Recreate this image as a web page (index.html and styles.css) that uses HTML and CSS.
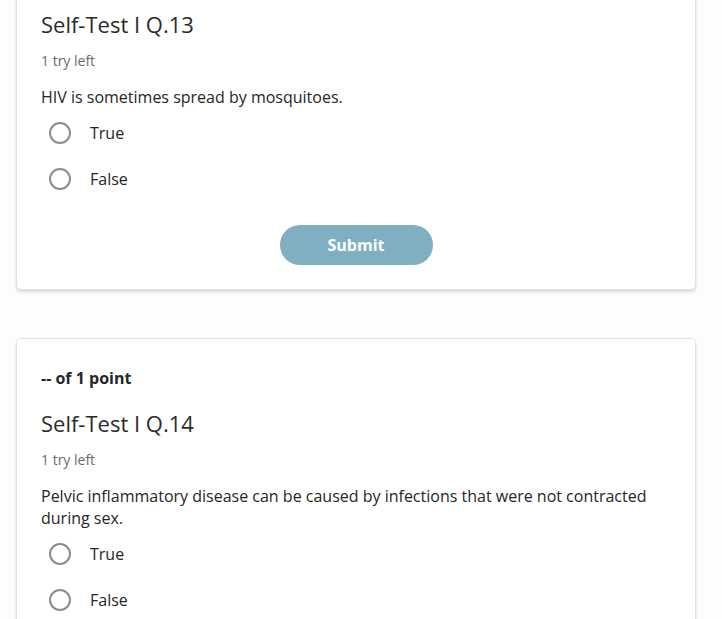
FILE: index.html
```html
<!DOCTYPE html>
<html lang="en">
<head>
    <meta charset="UTF-8">
    <meta name="viewport" content="width=device-width, initial-scale=1.0">
    <title>Self-Test I</title>
    <link rel="stylesheet" href="styles.css">
</head>
<body>

    <div class="quiz">
        <!-- Question 13 (scrolled, header above the fold) -->
        <div class="card">
            <h2 class="title">Self-Test I Q.13</h2>
            <p class="tries">1 try left</p>
            <p class="question">HIV is sometimes spread by mosquitoes.</p>
            <label class="option"><span class="radio"></span>True</label>
            <label class="option"><span class="radio"></span>False</label>
            <div class="actions">
                <button class="submit">Submit</button>
            </div>
        </div>

        <!-- Question 14 -->
        <div class="card">
            <p class="points">-- of 1 point</p>
            <h2 class="title">Self-Test I Q.14</h2>
            <p class="tries">1 try left</p>
            <p class="question">Pelvic inflammatory disease can be caused by infections that were not contracted during sex.</p>
            <label class="option"><span class="radio"></span>True</label>
            <label class="option"><span class="radio"></span>False</label>
        </div>
    </div>

</body>
</html>
```

FILE: styles.css
```css
body {
    margin: 0;
    background-color: #fdfdfd;
    font-family: "Open Sans", "Liberation Sans", sans-serif;
    color: #262626;
    overflow: hidden;
}
.quiz {
    width: 680px;
    margin: -37px 0 0 16px;
}
.card {
    background-color: #fff;
    border: 1px solid #e2e2e2;
    border-radius: 5px;
    box-shadow: 0 2px 3px rgba(0, 0, 0, 0.15);
    padding: 27px 24px 24px;
    margin-bottom: 48px;
}
.points {
    margin: 0;
    font-size: 16px;
    line-height: 24px;
    font-weight: bold;
}
.title {
    margin: 17px 0 0;
    font-size: 22px;
    line-height: 32px;
    font-weight: normal;
    color: #2b2b2b;
}
.tries {
    margin: 11px 0 0;
    font-size: 14px;
    line-height: 20px;
    color: #6b6b6b;
}
.question {
    margin: 15px 0 2px;
    font-size: 16px;
    line-height: 22px;
}
.option {
    display: flex;
    align-items: center;
    height: 46px;
    padding-left: 8px;
    font-size: 16px;
    cursor: pointer;
}
.radio {
    width: 18px;
    height: 18px;
    border: 2px solid #8c8c8c;
    border-radius: 50%;
    margin-right: 19px;
}
.actions {
    display: flex;
    justify-content: center;
    margin-top: 23px;
}
.submit {
    width: 153px;
    height: 40px;
    border: none;
    border-radius: 20px;
    background-color: #80afc2;
    color: #fff;
    font-family: inherit;
    font-size: 16px;
    font-weight: bold;
    cursor: pointer;
}
```
